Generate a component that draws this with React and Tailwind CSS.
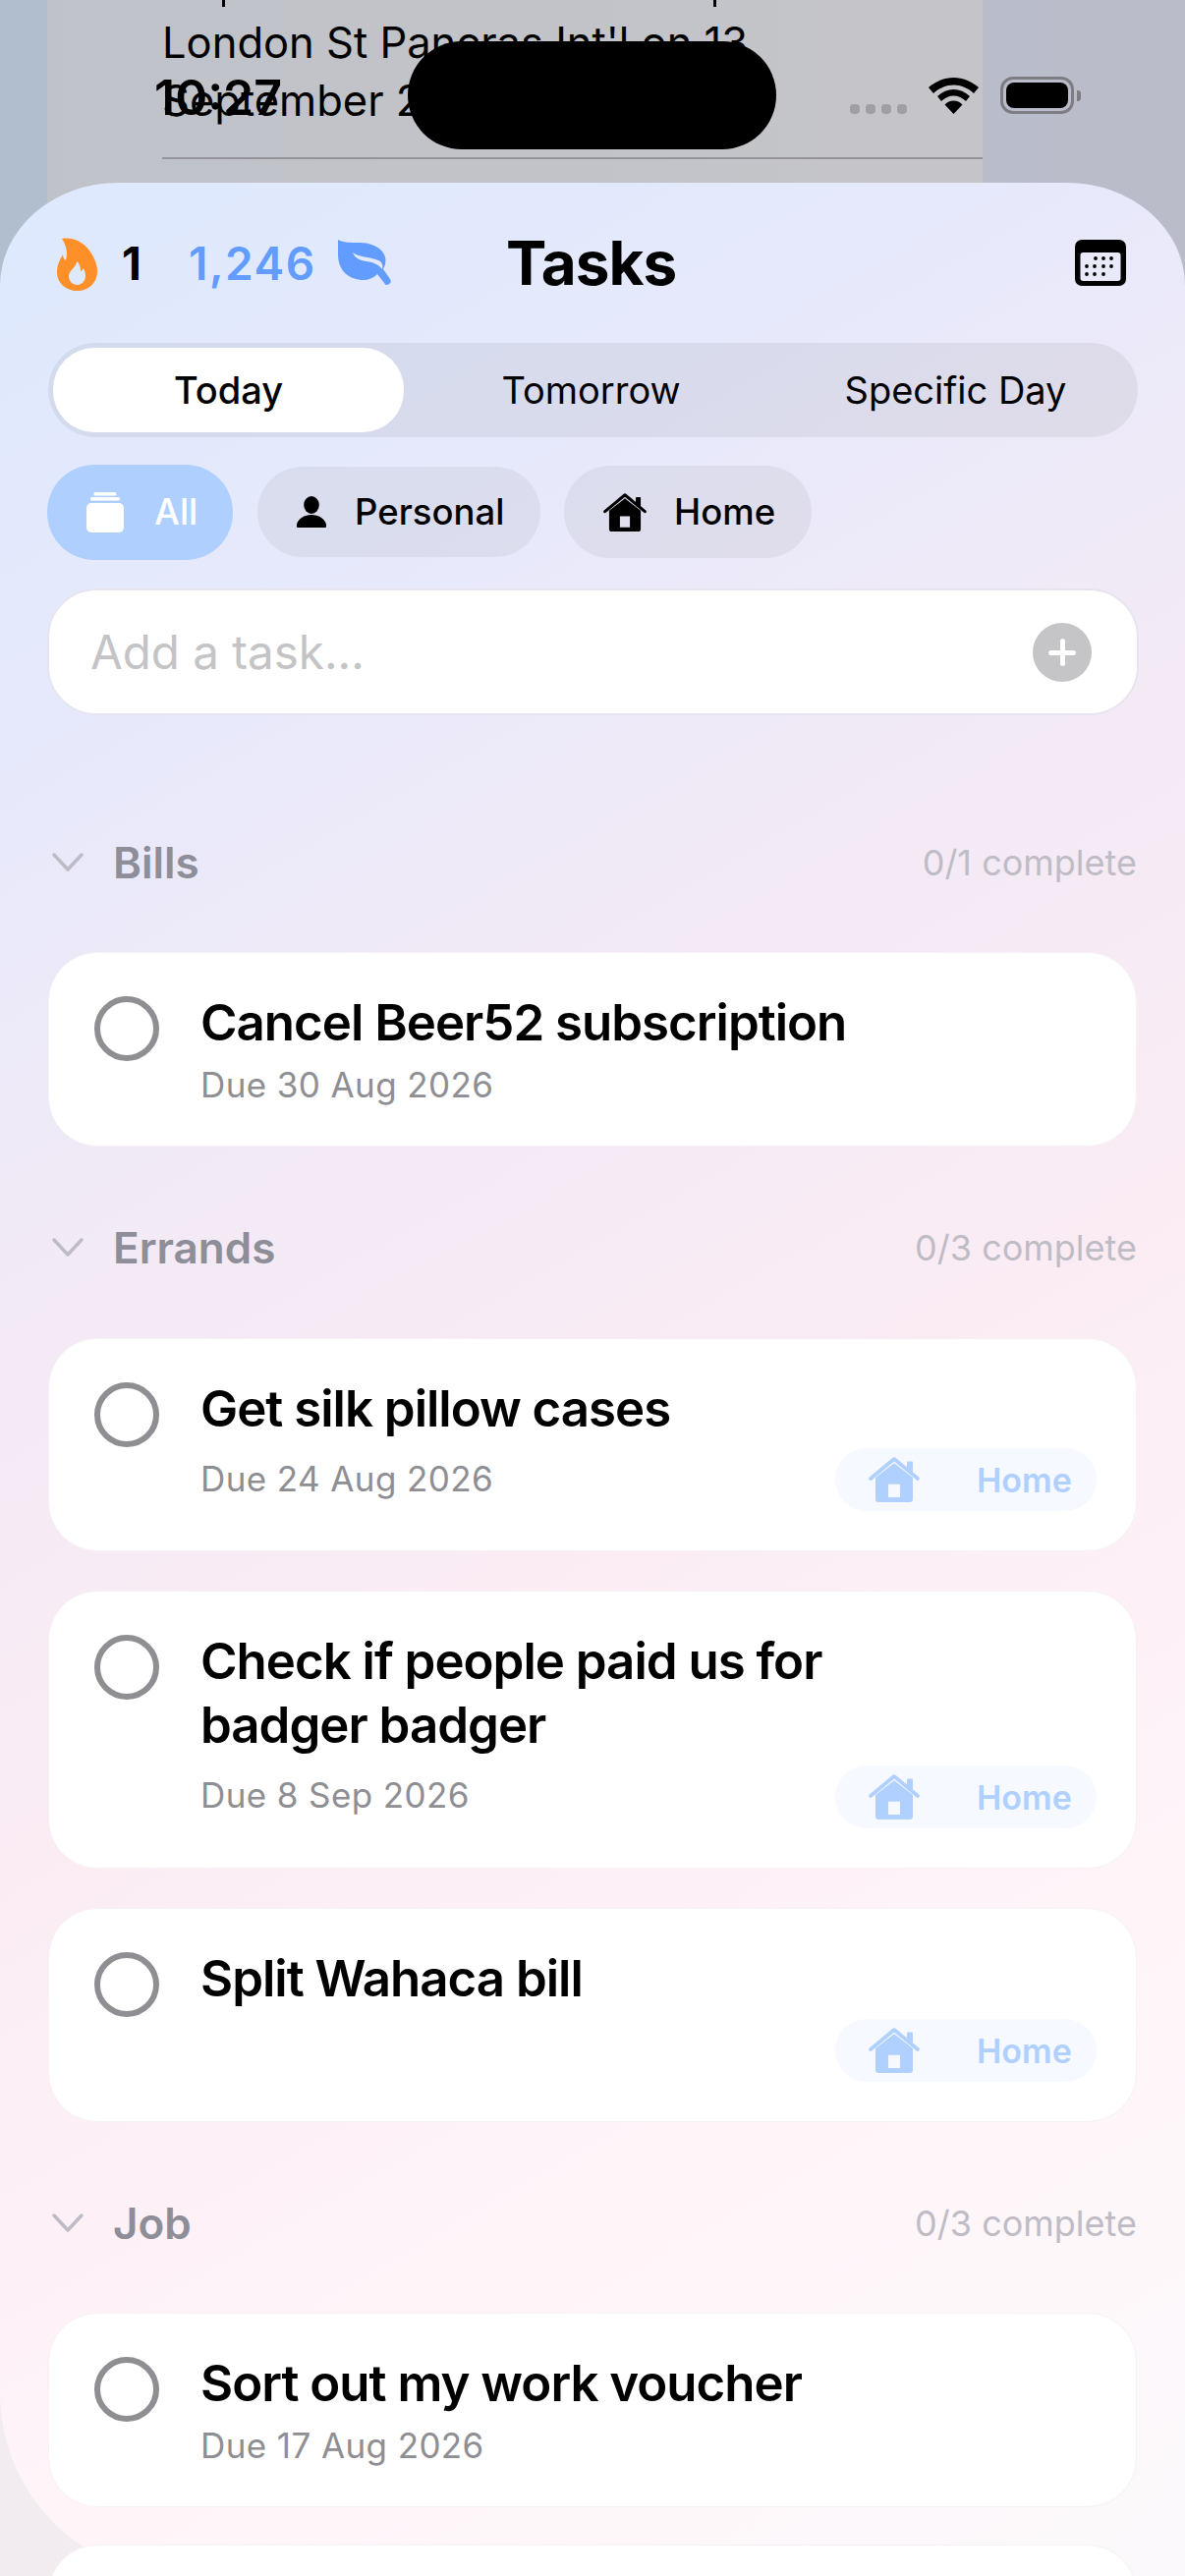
const sf = { fontFamily: 'Inter, "Liberation Sans", sans-serif' };

function Flame() {
  return (
    <svg width="42" height="54" viewBox="0 0 42 54">
      <path fill="#ff9029" fillRule="evenodd" d="M5 1C14-1 26 3 33 13c5 7 8 14 8 21 0 12-9 20-20 20C9 54 0 46 0 35c0-7 3-13 6-18 0 3 1 5 3 6 2-7 1-15-4-22zM20 24c0 6-8 9-8 15 0 5 4 9 8.500 9s8.500-4 8.500-9c0-3-1-6-2-8-1 2-2 3-3 3 0-4-1-8-4-10z" />
    </svg>
  );
}

function Leaf() {
  return (
    <svg width="54" height="47" viewBox="0 0 54 47">
      <path fill="#639cff" fillRule="evenodd" d="M0 0c5 3 13 3 22 3 13 0 24 6 26 15 1 4 0 8-2 12l7 10c1 2 1 4-1 5-2 2-4 1-5-1l-7-9c-4 4-9 6-14 6C12 41 0 32 0 15zM15 13c2 5 6 8 14 9 8 1 13 4 16 8 1-3 0-6-2-8-3-2-8-3-13-4-6-1-11-2-15-5z" />
    </svg>
  );
}

function CalendarIcon() {
  return (
    <svg width="52" height="47" viewBox="0 0 52 47">
      <rect width="52" height="47" rx="7" fill="#000" />
      <rect x="5.500" y="13" width="41" height="29" rx="3" fill="#e8eafa" />
      {[[21,19],[29,19],[37,19],[12,27],[20,27],[29,27],[37,27],[12,35],[20,35],[29,35]].map(([cx, cy]) => (
        <circle key={`${cx}-${cy}`} cx={cx} cy={cy} r="1.900" fill="#000" />
      ))}
    </svg>
  );
}

function House({ color, door, w = 44, h = 39 }) {
  return (
    <svg width={w} height={h} viewBox="0 0 52 46">
      <path fill={color} d="M7 21 26 6.300 45 21v22a3 3 0 0 1-3 3H10a3 3 0 0 1-3-3z" />
      <rect x="20" y="27.700" width="12" height="13.300" fill={door} />
      <path fill="none" stroke={color} strokeWidth="3.600" strokeLinecap="round" strokeLinejoin="round" d="M2 22 26 2l24 20" />
      <rect x="39" y="4.600" width="6" height="11" rx="1" fill={color} />
    </svg>
  );
}

function Person() {
  return (
    <svg width="30" height="32" viewBox="0 0 30 32">
      <ellipse cx="15" cy="9" rx="7.800" ry="9" fill="#000" />
      <path fill="#000" d="M1 32c-2 0-1-3-1-3 1-6 8-10 15-10s14 4 15 10c0 0 1 3-1 3z" />
    </svg>
  );
}

function Jar() {
  return (
    <svg width="38" height="41" viewBox="0 0 38 41">
      <rect x="7.500" y="0" width="23" height="3.500" rx="1.500" fill="#fff" />
      <rect x="4" y="5" width="30" height="3.500" rx="1.500" fill="#fff" />
      <rect x="0" y="11" width="38" height="30" rx="5" fill="#fff" />
    </svg>
  );
}

function Chevron() {
  return (
    <svg width="34" height="22" viewBox="0 0 34 22" fill="none">
      <path d="M3 3l14 15L31 3" stroke="#bdbcc6" strokeWidth="3.500" strokeLinecap="round" strokeLinejoin="round" />
    </svg>
  );
}

function SectionHeader({ title, count, mt }) {
  return (
    <div className={`flex items-center justify-between h-[60px] ${mt}`}>
      <div className="flex items-center gap-[29px] pl-[3px]">
        <Chevron />
        <span className="text-[44px] font-semibold text-[#8e8e98]">{title}</span>
      </div>
      <span className="text-[36px] text-[#bfbcc5]">{count}</span>
    </div>
  );
}

function TaskCard({ title, due, tag, h, last }) {
  return (
    <div className={`relative ${h} w-full shrink-0 bg-white rounded-[50px] border border-[#f6f1f5] pl-[46px] pr-[40px] pt-[44px] flex gap-[42px] ${last ? '' : 'mb-[40px]'}`}>
      <div className="w-[66px] h-[66px] rounded-full border-[6px] border-[#8e8e93] shrink-0" />
      <div className="flex flex-col min-w-0">
        <div className="text-[51px] leading-[65px] font-semibold text-black tracking-[-1px] mt-[-6px] max-w-[700px]">{title}</div>
        {due && <div className={`text-[35px] leading-[46px] text-[#8e8e93] tracking-[0.4px] ${tag ? 'mt-[16px]' : 'mt-[8px]'}`}>{due}</div>}
      </div>
      {tag && (
        <div className="absolute right-[40px] bottom-[40px] w-[266px] h-[64px] rounded-full bg-[#f6f9ff] flex items-center pl-[34px] gap-[58px]">
          <House color="#b0d0ff" door="#f6f9ff" w={52} h={46} />
          <span className="text-[34px] font-semibold text-[#b0d0ff]">Home</span>
        </div>
      )}
    </div>
  );
}

export default function App() {
  return (
    <div style={sf} className="relative w-[1206px] h-[2622px] overflow-hidden bg-gradient-to-r from-[#f2ecf0] to-[#fbf9fb]">
      {/* background page */}
      <div className="absolute left-0 right-0 top-0 h-[320px] bg-gradient-to-r from-[#b1bece] to-[#bbbcca]">
        <div className="relative ml-[48px] w-[952px] h-full bg-gradient-to-r from-[#bfc2c9] to-[#c5c5c9] pl-[117px] pt-[13px]">
          <div className="absolute left-[178px] top-0 w-[3px] h-[7px] bg-black" />
          <div className="absolute left-[678px] top-0 w-[3px] h-[7px] bg-black" />
          <div className="text-[43.500px] leading-[60px] text-black whitespace-nowrap">London St Pancras Int'l on 13</div>
          <div className="text-[43.500px] leading-[60px] text-black mt-[-1px]">September 2</div>
          <div className="h-[2px] bg-[#94949a] mt-[28px]" />
        </div>
      </div>

      {/* status bar */}
      <div className="absolute left-[157px] top-[71px] text-[50px] leading-[56px] font-semibold text-black">10:27</div>
      <div className="absolute left-[415px] top-[42px] w-[375px] h-[110px] bg-black rounded-[55px]" />
      <div className="absolute left-[865px] top-[106px] flex gap-[6px]">
        {[0,1,2,3].map(i => <div key={i} className="w-[10px] h-[10px] rounded-[4px] bg-[#a0a0a4]" />)}
      </div>
      <svg className="absolute left-[945px] top-[79px]" width="51" height="37" viewBox="0 0 51 37">
        <path fill="#000" d="M25.500 0C35 0 44 4 51 10l-5 6C40 10.500 33 7.500 25.500 7.500S11 10.500 5 16L0 10C7 4 16 0 25.500 0zM25.500 12c6 0 11.500 2.500 16.500 7l-4 5c-3.500-3.500-8-5.500-12.500-5.500S16.500 20.500 13 24l-4-5c5-4.500 10.500-7 16.500-7zM25.500 23.500c3.500 0 6.500 1.500 9 4l-9 9.500-9-9.500c2.500-2.500 5.500-4 9-4z" />
      </svg>
      <div className="absolute left-[1018px] top-[78px] w-[75px] h-[38px] rounded-[13px] border-[3px] border-[#7c7c82] p-[3px]">
        <div className="w-full h-full bg-black rounded-[8px]" />
      </div>
      <div className="absolute left-[1096px] top-[92px] w-[4px] h-[11px] rounded-r-[3px] bg-[#7c7c82]" />

      {/* sheet */}
      <div className="absolute left-0 right-0 top-[186px] h-[2436px] rounded-tl-[120px_105px] rounded-tr-[120px_105px] rounded-b-[186px] bg-[linear-gradient(150deg,#dde9fd_0%,#e7e9fb_20%,#f2eaf6_36%,#fbecf4_55%,#fff5f9_78%,#fbf9fb_100%)]" />

      {/* content */}
      <div className="relative pt-[186px] px-[49px] h-full">
        <div className="relative h-[163px] flex items-center justify-between pt-[2px]">
          <div className="flex items-center ml-[9px]">
            <Flame />
            <span className="ml-[24px] text-[46px] font-bold text-black w-[68px]">1</span>
            <span className="text-[46px] font-semibold text-[#639cff] tracking-[1.5px]">1,246</span>
            <span className="ml-[22px] mt-[-2px]"><Leaf /></span>
          </div>
          <div className="absolute left-[466px] top-[46px] text-[62px] leading-[72px] font-bold text-black tracking-[-1px]">Tasks</div>
          <div className="mr-[11px] mt-[-2px]"><CalendarIcon /></div>
        </div>

        {/* tabs */}
        <div className="h-[96px] w-[1109px] rounded-[48px] bg-black/[0.06] p-[5px] flex items-center text-[38px] text-black">
          <div className="w-[357px] h-full rounded-[42px] bg-white flex items-center justify-center font-medium">Today</div>
          <div className="w-[381px] text-center">Tomorrow</div>
          <div className="flex-1 text-center">Specific Day</div>
        </div>

        {/* chips */}
        <div className="flex items-center gap-[25px] mt-[28px] ml-[-1px] h-[96px] text-[36.500px] font-medium">
          <div className="w-[189px] h-[97px] rounded-[48px] bg-[#afd0fe] flex items-center pl-[40px] gap-[31px] text-white">
            <Jar />
            <span>All</span>
          </div>
          <div className="w-[288px] h-[92px] rounded-[46px] bg-black/[0.05] flex items-center pl-[40px] gap-[29px] text-black">
            <Person />
            <span>Personal</span>
          </div>
          <div className="w-[252px] h-[94px] ml-[-1px] rounded-[47px] bg-black/[0.05] flex items-center pl-[40px] gap-[28px] text-black">
            <House color="#000" door="#e0e0ee" />
            <span>Home</span>
          </div>
        </div>

        {/* input */}
        <div className="mt-[30px] ml-[-1px] h-[129px] w-[1111px] bg-white rounded-[50px] border-2 border-[#e7e4ef] flex items-center justify-between pl-[42px] pr-[46px]">
          <span className="text-[47.500px] text-[#c4c4c6]">Add a task...</span>
          <div className="w-[60px] h-[60px] rounded-full bg-[#c5c5c7] relative">
            <div className="absolute left-[28px] top-[16px] w-[5px] h-[28px] rounded bg-white" />
            <div className="absolute left-[16px] top-[28px] w-[28px] h-[5px] rounded bg-white" />
          </div>
        </div>

        <SectionHeader title="Bills" count="0/1 complete" mt="mt-[120px]" />
        <div className="mt-[61px]">
          <TaskCard title="Cancel Beer52 subscription" due="Due 30 Aug 2026" h="h-[198px]" last />
        </div>

        <SectionHeader title="Errands" count="0/3 complete" mt="mt-[73px]" />
        <div className="mt-[62px]">
          <TaskCard title="Get silk pillow cases" due="Due 24 Aug 2026" tag h="h-[217px]" />
          <TaskCard title="Check if people paid us for badger badger" due="Due 8 Sep 2026" tag h="h-[283px]" />
          <TaskCard title="Split Wahaca bill" tag h="h-[218px]" last />
        </div>

        <SectionHeader title="Job" count="0/3 complete" mt="mt-[73px]" />
        <div className="mt-[61px]">
          <div className="mb-[-2px]"><TaskCard title="Sort out my work voucher" due="Due 17 Aug 2026" h="h-[198px]" /></div>
          <TaskCard title="" h="h-[198px]" last />
        </div>
      </div>
    </div>
  );
}
